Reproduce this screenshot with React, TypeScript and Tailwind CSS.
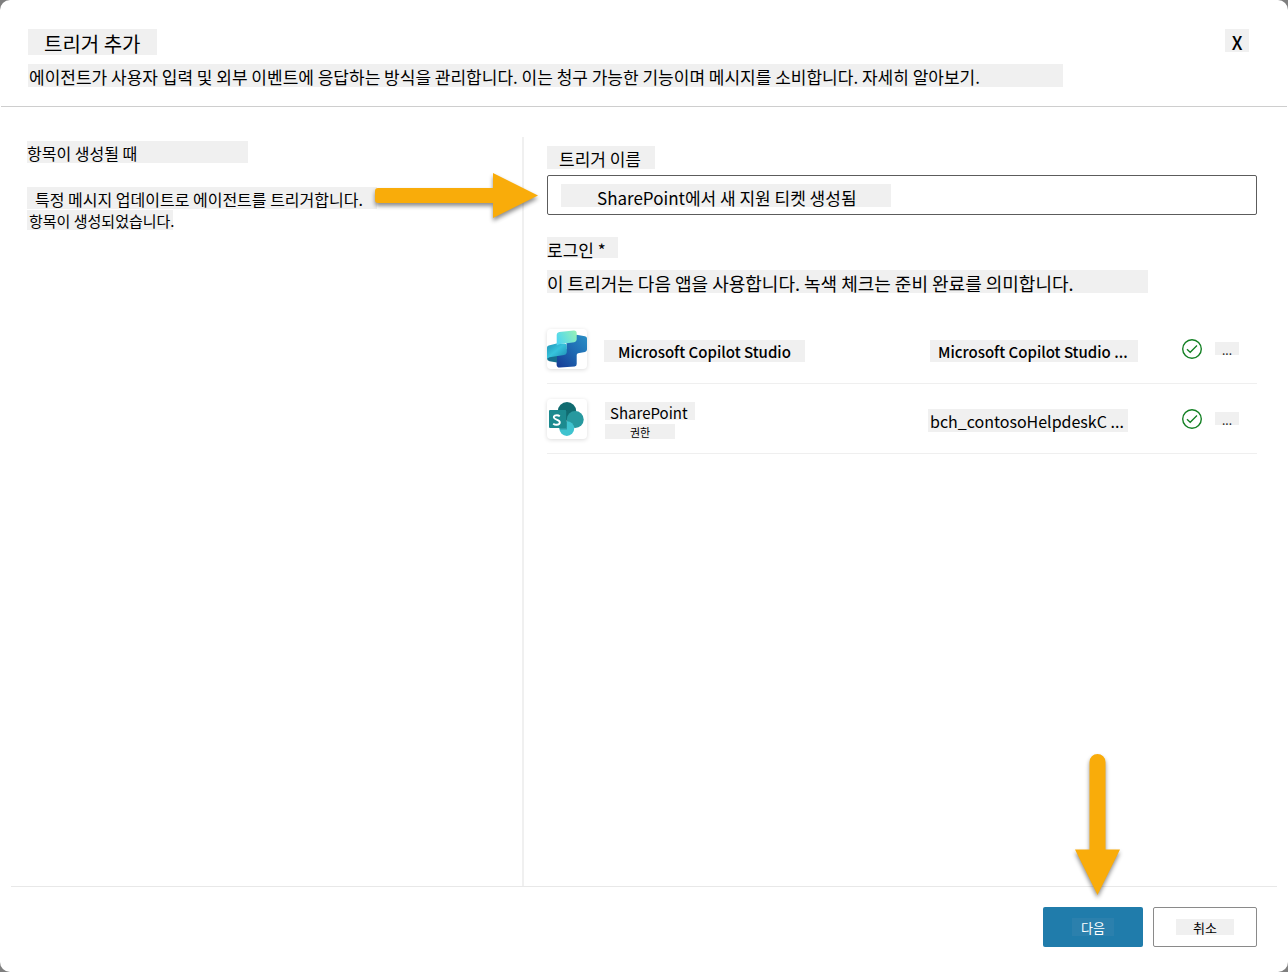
import React from "react";

const tile =
  "flex size-10 shrink-0 items-center justify-center overflow-hidden rounded-[4px] bg-white shadow-[0_1px_4px_rgba(0,0,0,0.14)]";

function CopilotStudioIcon() {
  return (
    <svg viewBox="0 0 40 40" className="size-10" aria-hidden="true">
      <defs>
        <linearGradient id="csTop" x1="0" y1="0.6" x2="1" y2="0.2">
          <stop offset="0" stopColor="#4fd6f0" />
          <stop offset="1" stopColor="#93f0b8" />
        </linearGradient>
        <linearGradient id="csLeft" x1="0" y1="0" x2="1" y2="1">
          <stop offset="0" stopColor="#2295b8" />
          <stop offset="0.45" stopColor="#36c3dc" />
          <stop offset="1" stopColor="#1b86ad" />
        </linearGradient>
        <linearGradient id="csRight" x1="1" y1="0" x2="0" y2="1">
          <stop offset="0" stopColor="#2a90c6" />
          <stop offset="0.45" stopColor="#1f6cb4" />
          <stop offset="1" stopColor="#163a94" />
        </linearGradient>
      </defs>
      <path
        d="M29.5 5.8 38 7.2Q40 7.6 40 9.5V20.5Q40 22.4 38 23L31 24.2Q29.7 24.6 29.7 26V35Q29.7 37.2 27.6 37.5L13 38.6Q9.6 38.8 9.6 35.5V26L19.5 20V12Z"
        fill="url(#csRight)"
      />
      <path d="M0 25.5 10 27V33.6L2.5 32.3Q0 31.8 0 29.5Z" fill="#176f8e" />
      <path
        d="M0 18.5Q0 16.8 1.8 16.5L9.6 14.6H17.5Q19.8 14.8 19.8 17V23.2Q19.6 25.6 17 26L2.5 28.3Q0 28.8 0 31Z"
        fill="url(#csLeft)"
      />
      <path
        d="M9.7 5.8Q9.7 3.4 12.2 3L26.8 1.6Q29.7 1.5 29.7 4.2V10.6Q29.6 12.8 27.2 13.2L20 14.2Q12 14.6 9.7 16.4Z"
        fill="url(#csTop)"
      />
    </svg>
  );
}

function SharePointIcon() {
  return (
    <svg viewBox="0 0 40 40" className="size-10" aria-hidden="true">
      <circle cx="20" cy="12.2" r="9.2" fill="#106b70" />
      <circle cx="28.2" cy="20.6" r="8.5" fill="#27999f" />
      <circle cx="19.8" cy="29.6" r="7.4" fill="#3fc3cf" />
      <path d="M11 11h9v19.5h-7.5Z" fill="#0b4d52" opacity="0.35" />
      <rect x="2" y="11" width="17.4" height="18" rx="1" fill="#1c8a8f" />
      <path
        d="M12.8 17.2c-1-.8-2.200-1.100-3.400-1-1.800.1-2.700 1-2.600 2.100.1 2.700 6 1.800 6 5 0 1.600-1.400 2.500-3.200 2.500-1.300 0-2.500-.4-3.400-1.100"
        fill="none"
        stroke="#fff"
        strokeWidth="1.900"
      />
    </svg>
  );
}

function ReadyIcon() {
  return (
    <svg viewBox="0 0 20 20" className="size-5 shrink-0" role="img" aria-label="준비 완료">
      <circle cx="10" cy="10" r="9.300" fill="none" stroke="#138023" strokeWidth="1.400" />
      <path d="M5 10.300 8.200 13.300 15 6.500" fill="none" stroke="#138023" strokeWidth="1.300" />
    </svg>
  );
}

function MoreButton() {
  return (
    <button
      type="button"
      className="h-[13px] w-6 shrink-0 bg-[#f0f0f0] text-center text-[12px] leading-[15px] text-[#222]"
    >
      ...
    </button>
  );
}

export default function App() {
  return (
    <div className="flex min-h-screen bg-[#7f7f7f] font-['Noto_Sans_CJK_KR',sans-serif] text-black">
      <div className="flex w-full flex-col rounded-[10px] bg-white">
        <header className="mx-px flex items-start justify-between border-b border-[#cecece] pt-[29px] pr-[38px] pb-[19px] pl-[27px]">
          <div>
            <h1 className="h-[26px] w-[129px] bg-[#f0f0f0] pl-4 text-[20px] leading-[30px] whitespace-nowrap">
              트리거 추가
            </h1>
            <p className="mt-[9px] h-[23px] w-[1035px] bg-[#f0f0f0] pl-px text-[17px] leading-[25px] whitespace-nowrap">
              에이전트가 사용자 입력 및 외부 이벤트에 응답하는 방식을 관리합니다. 이는 청구 가능한 기능이며 메시지를
              소비합니다. 자세히 알아보기.
            </p>
          </div>
          <button
            type="button"
            className="-ml-6 h-[23px] w-6 bg-[#f0f0f0] text-[18px] leading-[27px] font-medium"
          >
            X
          </button>
        </header>

        <main className="grid flex-1 grid-cols-[522px_1fr] pt-[30px]">
          <section className="pt-1 pl-[27px]">
            <h2 className="h-[22px] w-[221px] bg-[#f0f0f0] text-[16px] leading-[24px]">항목이 생성될 때</h2>
            <p className="mt-6 h-[22px] w-[350px] bg-[#f0f0f0] pl-2 text-[16px] leading-[24px] whitespace-nowrap">
              특정 메시지 업데이트로 에이전트를 트리거합니다.
            </p>
            <p className="mt-px h-5 w-[146px] bg-[#f0f0f0] pl-[2px] text-[15px] leading-[22px] whitespace-nowrap">
              항목이 생성되었습니다.
            </p>
          </section>

          <section className="border-l-2 border-[#f0f0f0] pt-[9px] pr-[31px] pl-[23px]">
            <label
              htmlFor="trigger-name"
              className="block h-[23px] w-[108px] bg-[#f0f0f0] pl-3 text-[17px] leading-[26px]"
            >
              트리거 이름
            </label>
            <div className="relative mt-[6px] flex h-10 items-center rounded-[2px] border border-[#5c5c5c] px-[13px]">
              <input
                id="trigger-name"
                type="text"
                defaultValue="SharePoint에서 새 지원 티켓 생성됨"
                className="mt-px h-[23px] w-[330px] bg-[#f0f0f0] pt-1 pl-9 text-[17px] outline-none"
              />
              <svg
                viewBox="0 0 163 45"
                className="absolute right-full mr-[10px] h-[45px] w-[163px] overflow-visible drop-shadow-[0_3px_2px_rgba(0,0,0,0.45)]"
                aria-hidden="true"
              >
                <path d="M3 15H118V0L163 22.500 118 45V30H3Q0 30 0 27V18Q0 15 3 15Z" fill="#f9ac0a" />
              </svg>
            </div>

            <h3 className="mt-[22px] h-[21px] w-[71px] bg-[#f0f0f0] text-[17px] leading-[26px]">로그인 *</h3>
            <p className="mt-3 h-[23px] w-[601px] bg-[#f0f0f0] text-[18px] leading-[27px] whitespace-nowrap">
              이 트리거는 다음 앱을 사용합니다. 녹색 체크는 준비 완료를 의미합니다.
            </p>

            <ul className="mt-[21px]">
              <li className="flex h-[70px] items-center border-b border-[#efefef] pr-[18px]">
                <span className={tile}>
                  <CopilotStudioIcon />
                </span>
                <span className="mt-1 ml-[17px] h-[22px] w-[201px] bg-[#f0f0f0] text-center text-[15px] leading-[24px] font-medium">
                  Microsoft Copilot Studio
                </span>
                <span className="mt-1 ml-auto h-[22px] w-[208px] bg-[#f0f0f0] pl-2 text-[15px] leading-[24px] font-medium whitespace-nowrap">
                  Microsoft Copilot Studio ...
                </span>
                <span className="ml-11 flex items-center gap-[13px]">
                  <ReadyIcon />
                  <MoreButton />
                </span>
              </li>
              <li className="flex h-[70px] items-center border-b border-[#efefef] pr-[18px]">
                <span className={tile}>
                  <SharePointIcon />
                </span>
                <span className="mt-1 ml-[18px] flex flex-col gap-1">
                  <span className="h-[18px] w-[90px] bg-[#f0f0f0] pl-[5px] text-[15px] leading-[22px]">
                    SharePoint
                  </span>
                  <span className="h-[15px] w-[70px] bg-[#f0f0f0] text-center text-[11px] leading-[17px]">권한</span>
                </span>
                <span className="mt-1 mr-[10px] ml-auto h-[23px] w-[200px] bg-[#f0f0f0] pl-[2px] text-[16px] leading-[24px] whitespace-nowrap">
                  bch_contosoHelpdeskC ...
                </span>
                <span className="ml-11 flex items-center gap-[13px]">
                  <ReadyIcon />
                  <MoreButton />
                </span>
              </li>
            </ul>
          </section>
        </main>

        <footer className="mx-[11px] flex justify-end gap-[10px] border-t border-[#e8e8e8] pt-5 pr-5 pb-[25px]">
          <div className="relative">
            <button
              type="button"
              className="flex h-10 w-[100px] items-center justify-center rounded-[2px] bg-[#207cab] text-[13px] text-white"
            >
              <span className="h-[18px] w-[42px] bg-[#2b80ad] leading-[20px]">다음</span>
            </button>
            <svg
              viewBox="0 0 45 141"
              className="absolute bottom-full left-8 mb-3 h-[141px] w-[45px] overflow-visible drop-shadow-[0_3px_2px_rgba(0,0,0,0.45)]"
              aria-hidden="true"
            >
              <path d="M14.500 8A8 8 0 0 1 30.500 8V95.500H45L22.500 141 0 95.500H14.500Z" fill="#f9ac0a" />
            </svg>
          </div>
          <button
            type="button"
            className="flex h-10 w-[104px] items-center justify-center rounded-[2px] border border-[#8a8a8a] bg-white text-[13px]"
          >
            <span className="h-4 w-[58px] bg-[#f0f0f0] leading-[17px]">취소</span>
          </button>
        </footer>
      </div>
    </div>
  );
}
